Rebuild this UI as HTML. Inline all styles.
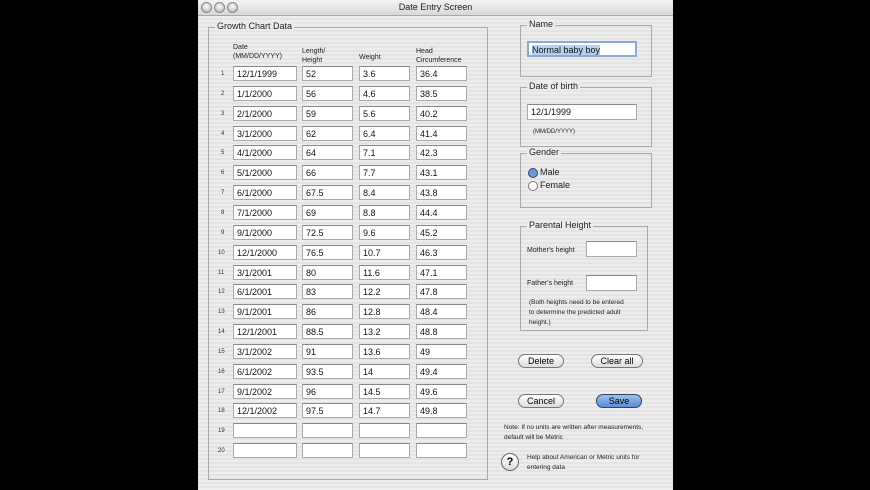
<!DOCTYPE html>
<html><head><style>
body{margin:0;width:870px;height:490px;background:#000;position:relative;overflow:hidden;font-family:"Liberation Sans",sans-serif;}
#win{position:absolute;left:198px;top:0;width:475px;height:490px;background:repeating-linear-gradient(#ededed 0 2px,#e4e4e4 2px 4px);}
#title{position:absolute;left:0;top:0;width:475px;height:15px;background:linear-gradient(#f4f4f4,#d8d8d8);border-bottom:1px solid #a8a8a8;font-size:9px;text-align:center;line-height:15px;color:#222}
.dot{position:absolute;top:2px;width:9px;height:9px;border-radius:50%;background:radial-gradient(circle at 50% 40%,#fff,#aaa);border:1px solid #888}
.grp{position:absolute;border:1px solid #aaa;}
.lg{position:absolute;font-size:9px;background:#ececec;padding:0 2px;color:#222;top:-7px;left:6px}
.f{position:absolute;height:14px;background:#fff;border:1px solid #aaa;border-top-color:#888;font-size:9px;line-height:14px;padding-left:3px;box-sizing:border-box;color:#111}
.n{position:absolute;font-size:6px;color:#333}
.t{position:absolute;font-size:7px;color:#222;line-height:9px}
.b{position:absolute;height:14px;border:1px solid #777;border-radius:8px;background:linear-gradient(#fff,#ddd);font-size:9px;text-align:center;line-height:13px;box-sizing:border-box}
</style></head><body>
<div id="win">
<div id="title"><div class="dot" style="left:3px"></div><div class="dot" style="left:16px"></div><div class="dot" style="left:29px"></div>Date Entry Screen</div>
<div class="grp" style="left:10px;top:27px;width:278px;height:451px"><div class="lg">Growth Chart Data</div></div>
<div class="t" style="left:35px;top:43px;font-size:7px">Date<br>(MM/DD/YYYY)</div>
<div class="t" style="left:104px;top:47px">Length/<br>Height</div>
<div class="t" style="left:161px;top:53px">Weight</div>
<div class="t" style="left:218px;top:47px">Head<br>Circumference</div>
<div id="rows"></div>
<div class="grp" style="left:322px;top:25px;width:130px;height:50px"><div class="lg">Name</div></div>
<div class="f" style="left:329px;top:41px;width:110px;height:16px;border:2px solid #8aa8d8"><span style="background:#b5d0f0">Normal baby boy</span></div>
<div class="grp" style="left:322px;top:87px;width:130px;height:58px"><div class="lg">Date of birth</div></div>
<div class="f" style="left:329px;top:104px;width:110px;height:16px">12/1/1999</div>
<div class="t" style="left:335px;top:128px;font-size:6px">(MM/DD/YYYY)</div>
<div class="grp" style="left:322px;top:153px;width:130px;height:53px"><div class="lg">Gender</div></div>
<div style="position:absolute;left:330px;top:168px;width:8px;height:8px;border-radius:50%;background:#6a9ad8;border:1px solid #446"></div>
<div class="t" style="left:342px;top:168px;font-size:9px">Male</div>
<div style="position:absolute;left:330px;top:181px;width:8px;height:8px;border-radius:50%;background:#fff;border:1px solid #777"></div>
<div class="t" style="left:342px;top:181px;font-size:9px">Female</div>
<div class="grp" style="left:322px;top:226px;width:126px;height:103px"><div class="lg">Parental Height</div></div>
<div class="t" style="left:329px;top:246px">Mother's height</div>
<div class="f" style="left:388px;top:241px;width:51px;height:16px"></div>
<div class="t" style="left:329px;top:279px">Father's height</div>
<div class="f" style="left:388px;top:275px;width:51px;height:16px"></div>
<div class="t" style="left:331px;top:298px;font-size:6.5px;line-height:10px">(Both heights need to be entered<br>to determine the predicted adult<br>height.)</div>
<div class="b" style="left:320px;top:354px;width:46px">Delete</div>
<div class="b" style="left:393px;top:354px;width:52px">Clear all</div>
<div class="b" style="left:320px;top:394px;width:46px">Cancel</div>
<div class="b" style="left:398px;top:394px;width:46px;background:linear-gradient(#9cc0ee,#5a8ed8);border-color:#345">Save</div>
<div class="t" style="left:306px;top:423px;font-size:6.5px;line-height:10px">Note: If no units are written after measurements,<br>default will be Metric</div>
<div style="position:absolute;left:303px;top:453px;width:16px;height:16px;border-radius:50%;border:1px solid #666;background:linear-gradient(#fff,#ddd);font-size:11px;font-weight:bold;text-align:center;line-height:16px">?</div>
<div class="t" style="left:329px;top:453px;font-size:6.5px;line-height:10px">Help about American or Metric units for<br>entering data</div>
</div>
<script>
var d=[["12/1/1999","52","3.6","36.4"],["1/1/2000","56","4.6","38.5"],["2/1/2000","59","5.6","40.2"],["3/1/2000","62","6.4","41.4"],["4/1/2000","64","7.1","42.3"],["5/1/2000","66","7.7","43.1"],["6/1/2000","67.5","8.4","43.8"],["7/1/2000","69","8.8","44.4"],["9/1/2000","72.5","9.6","45.2"],["12/1/2000","76.5","10.7","46.3"],["3/1/2001","80","11.6","47.1"],["6/1/2001","83","12.2","47.8"],["9/1/2001","86","12.8","48.4"],["12/1/2001","88.5","13.2","48.8"],["3/1/2002","91","13.6","49"],["6/1/2002","93.5","14","49.4"],["9/1/2002","96","14.5","49.6"],["12/1/2002","97.5","14.7","49.8"],["","","",""],["","","",""]];
var xs=[35,104,161,218],ws=[64,51,51,51],h="";
d.forEach(function(r,i){var y=66+i*19.85;h+='<div class="n" style="left:'+(i<9?23:20)+'px;top:'+(y+5)+'px">'+(i+1)+'</div>';r.forEach(function(v,j){h+='<div class="f" style="left:'+xs[j]+'px;top:'+y+'px;width:'+ws[j]+'px;height:15px">'+v+'</div>';});});
document.getElementById('rows').innerHTML=h;
</script>
</body></html>
